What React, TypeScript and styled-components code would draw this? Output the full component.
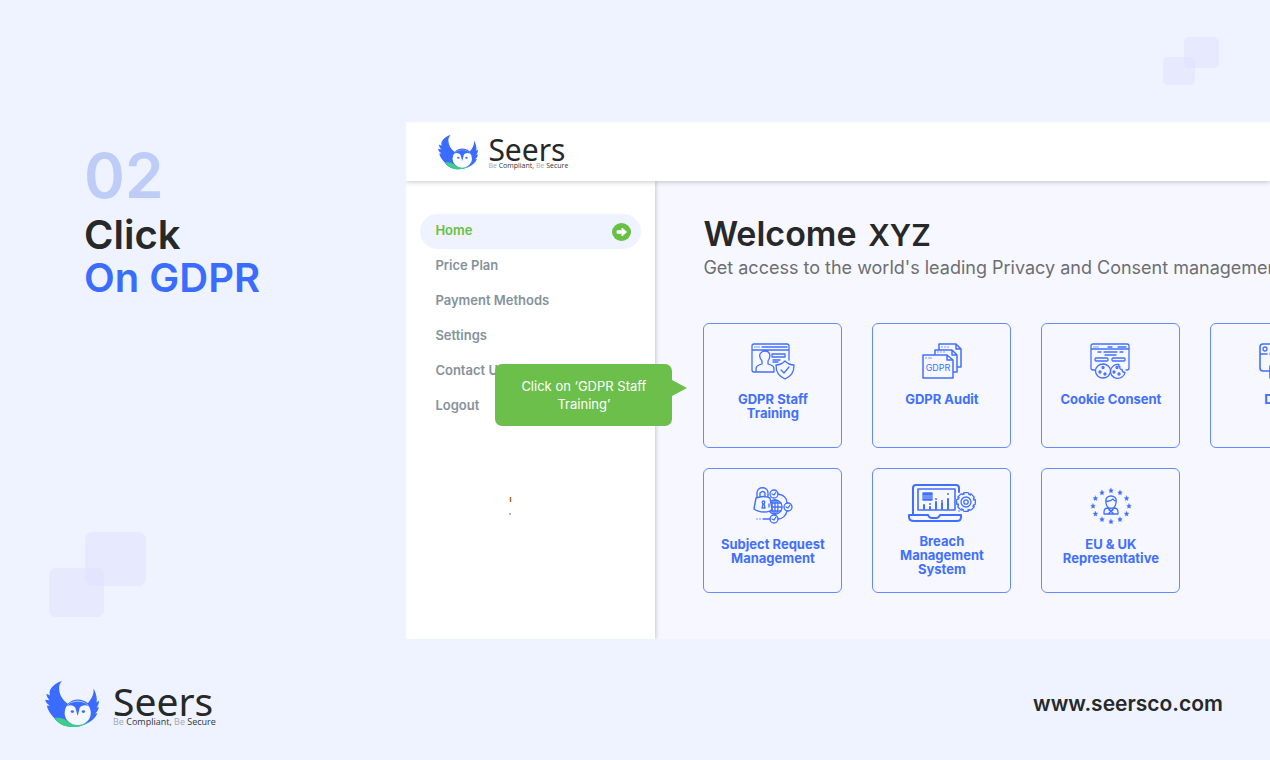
import React from 'react';
import styled, { createGlobalStyle } from 'styled-components';

const Global = createGlobalStyle`
  * { box-sizing: border-box; }
  body { margin: 0; background: #eef3ff; font-family: Inter, "Open Sans", sans-serif; color: #262829; }
  h1, h2, p, ul { margin: 0; padding: 0; }
`;

const Page = styled.div`
  position: relative;
  display: flex;
  flex-direction: column;
  min-height: 100vh;
  overflow: hidden;
`;

const Main = styled.main`
  display: flex;
  flex: 1;
  padding-top: 122px;
`;

const Intro = styled.section`
  flex: 0 0 32%;
  padding: 20px 0 0 84px;
`;

const StepNumber = styled.p`
  font-size: 62px;
  line-height: 68px;
  font-weight: 600;
  color: #bdcdf8;
`;

const StepTitle = styled.h1`
  padding-top: 3px;
  font-size: 40px;
  line-height: 43px;
  font-weight: 600;
  white-space: nowrap;
`;

const Accent = styled.span`
  display: block;
  color: #3a6dff;
`;

const Shot = styled.section`
  flex: 1;
  min-width: 0;
  display: flex;
  flex-direction: column;
  background: #f7f8ff;
  overflow: hidden;
`;

const ShotHeader = styled.header`
  position: relative;
  z-index: 1;
  height: 59px;
  padding: 12px 32px;
  background: #fff;
  box-shadow: 0 1px 5px rgba(0, 0, 0, 0.22);
`;

const ShotBody = styled.div`
  display: flex;
  flex: 1;
`;

const Sidebar = styled.nav`
  position: relative;
  flex: 0 0 249px;
  padding: 33px 14px;
  background: #fff;
  box-shadow: 1px 0 4px rgba(0, 0, 0, 0.2);
`;

const Menu = styled.ul`
  list-style: none;
`;

const MenuLink = styled.a<{ $active?: boolean }>`
  display: flex;
  align-items: center;
  justify-content: space-between;
  height: 35px;
  padding: 0 10px 0 15px;
  border-radius: 18px;
  background: ${p => (p.$active ? '#eef3ff' : 'transparent')};
  color: ${p => (p.$active ? '#68c143' : '#85929b')};
  font-size: 13px;
  line-height: 17px;
  font-weight: 600;
  text-decoration: none;
`;

const MenuText = styled.span`
  padding-bottom: 2px;
`;

const Tooltip = styled.div`
  position: absolute;
  left: 89px;
  top: 183px;
  width: 177px;
  padding: 13px 20px;
  border-radius: 7px;
  background: #6cbf4b;
  color: #fff;
  font-size: 13px;
  line-height: 18px;
  text-align: center;

  &::after {
    content: '';
    position: absolute;
    left: 100%;
    top: 16px;
    border: solid transparent;
    border-width: 8px 0 8px 15px;
    border-left-color: #6cbf4b;
  }
`;

const Caret = styled.svg`
  display: block;
  margin: 72px 0 0 88px;
`;

const Content = styled.div`
  flex: 1;
  min-width: 0;
  padding: 34px 0 46px 48px;
`;

const Welcome = styled.h2`
  font-size: 34px;
  line-height: 38px;
  font-weight: 600;
  white-space: nowrap;
`;

const UserName = styled.span`
  margin-left: 3px;
  font-size: 30px;
`;

const Lead = styled.p`
  padding-top: 3px;
  font-size: 18px;
  line-height: 22px;
  color: #6d6e72;
  white-space: nowrap;
`;

const Cards = styled.div`
  display: grid;
  grid-template-columns: repeat(4, 139px);
  gap: 20px 30px;
  padding-top: 44px;
`;

const Card = styled.button`
  display: flex;
  flex-direction: column;
  align-items: center;
  justify-content: flex-start;
  height: 125px;
  padding: 15px 8px 0;
  border: 1px solid #638bff;
  border-radius: 6px;
  background: transparent;
  color: #416fff;
  font-family: inherit;
  font-size: 13px;
  line-height: 14px;
  font-weight: 700;
`;

const CardLabel = styled.span<{ $lines: number }>`
  padding-top: ${p => (p.$lines > 2 ? 5 : 8)}px;
  white-space: pre-line;
`;

const Footer = styled.footer`
  display: flex;
  align-items: center;
  justify-content: space-between;
  height: 121px;
  padding: 8px 47px 0 45px;
`;

const SiteLink = styled.a`
  color: #262829;
  font-size: 21px;
  font-weight: 600;
  text-decoration: none;
`;

const Decor = styled.svg<{ $corner: 'top' | 'bottom' }>`
  position: absolute;
  ${p => (p.$corner === 'top' ? 'right: 51px; top: 37px;' : 'left: 49px; bottom: 142px;')}
`;

const LogoRow = styled.div<{ $gap: number }>`
  display: flex;
  align-items: flex-start;
  gap: ${p => p.$gap}px;
`;

const LogoText = styled.div`
  font-family: "Noto Sans", sans-serif;
  padding-top: 3px;
  white-space: nowrap;
`;

const LogoName = styled.div<{ $large?: boolean }>`
  font-size: ${p => (p.$large ? 39 : 30)}px;
  line-height: ${p => (p.$large ? 33 : 25)}px;
`;

const LogoTag = styled.div<{ $large?: boolean }>`
  font-family: "Open Sans", sans-serif;
  font-size: ${p => (p.$large ? 9 : 7)}px;
  line-height: ${p => (p.$large ? 10 : 7)}px;
  color: #333638;
`;

const Faint = styled.span`
  color: #a5a9ae;
`;

const OwlIcon = ({ width, height, face }: { width: number; height: number; face: string }) => (
  <svg width={width} height={height} viewBox="0 0 160 137" aria-hidden="true">
    <path fill="#3a6dff" d="M50 0C32 5 15 19 13 34c0 4 1 7 2 9L4 38c0 8 4 14 9 19L0 56c2 9 7 14 14 17l-9 1c3 13 11 25 23 38 12 16 30 25 54 25 28 0 62-14 74-41l-7 1c6-6 11-12 10-20l-6 3c5-7 8-14 7-21l-7 4c3-15-3-31-9-41 2 18-6 31-17 44-18-15-43-15-60 2C52 56 43 42 42 26 40 16 44 7 50 0z" />
    <path fill="#3dce8b" d="M28 111c14-3 27-1 40 10 20 13 46 10 65-1-14 12-33 17-53 17-22 0-42-10-52-26z" />
    <ellipse cx="97" cy="95" rx="39" ry="36" fill={face} />
    <path fill="#3a6dff" d="M65 75c12-19 52-19 64 0-12-5-21-2-26 5l-6 24-7-24c-5-7-14-10-25-5z" />
    <ellipse cx="81" cy="91" rx="5" ry="4" fill="#3a6dff" />
    <ellipse cx="114" cy="91" rx="5" ry="4" fill="#3a6dff" />
  </svg>
);

const Logo = ({ large }: { large?: boolean }) => (
  <LogoRow $gap={large ? 14 : 10}>
    <OwlIcon width={large ? 54 : 40} height={large ? 46 : 36} face={large ? '#f5f8ff' : '#fff'} />
    <LogoText>
      <LogoName $large={large}>Seers</LogoName>
      <LogoTag $large={large}><Faint>Be</Faint> Compliant, <Faint>Be</Faint> Secure</LogoTag>
    </LogoText>
  </LogoRow>
);

const Icon = ({ width = 60, children }: { width?: number; children: React.ReactNode }) => (
  <svg width={width} height={45} viewBox={`0 0 ${width} 45`} fill="none" stroke="#416fff" strokeWidth="1.3" strokeLinecap="round" strokeLinejoin="round" aria-hidden="true">
    {children}
  </svg>
);

const StaffIcon = () => (
  <Icon>
    <path d="M31 33H11q-2 0-2-2V7q0-2 2-2h33q2 0 2 2v14M9 11h37M12 8h0M14 8h0M16 8h0M19 8h25M13 33v-3q0-3 3-4l3-1v-3c-5-6-1-10 3-10s7 4 3 10v3l3 1q3 1 3 4v3M29 15h13v3H29zM30 21h7M30 23h5" />
    <path d="M42 22q-4 4-9 4c0 8 3 11 9 14 6-3 9-6 9-14q-5 0-9-4zM38 31l3 3 5-6" />
  </Icon>
);

const AuditIcon = () => (
  <Icon>
    <path strokeWidth="1.5" d="M11 16h24l6 5v18H11zM35 16v5h6M23 15v-4h17l5 5v17h-4M40 11v5h5M27 10V5h17l5 5v18h-4M44 5v5h5" />
    <path d="M14 19h0M17 19h0M19 19h0M26 13h0M29 13h0M32 13h0M30 8h0M33 8h0M36 8h0" />
    <text x="26" y="32" textAnchor="middle" fill="#416fff" stroke="none" fontSize="9" fontWeight="400" fontFamily="Inter, sans-serif">GDPR</text>
  </Icon>
);

const Cookie = ({ x, bitten }: { x: number; bitten?: boolean }) => (
  <g>
    {bitten
      ? <path d={`M${x + 2} 25.5a7.3 7 0 1 0 6 8q-3 0-3-3-3 0-2-3-2 0-1-2z`} />
      : <ellipse cx={x} cy="32" rx="7.5" ry="7" />}
    <circle cx={x} cy="28.5" r="1" /><circle cx={x - 3} cy="33" r="1" /><circle cx={x + 2} cy="35" r="1" />
  </g>
);

const CookieIcon = () => (
  <Icon>
    <path d="M14 31h-2q-2 0-2-2V7q0-2 2-2h34q2 0 2 2v22q0 2-2 2h-1M10 10h38M13 8h0M15 8h0M17 8h0M27 8h4M37 8h8M17 13h3M23 13h13M39 13h3M24 16h11" />
    <rect x="14" y="19" width="13" height="3" rx="1" /><rect x="31" y="19" width="13" height="3" rx="1" />
    <Cookie x={22} /><Cookie x={36} bitten />
  </Icon>
);

const DeviceIcon = () => (
  <Icon>
    <path strokeWidth="1.6" d="M19 32h-6q-3 0-3-3V8q0-3 3-3h30v24M10 15h7M20 15h18M20 27v12h20" />
    <circle cx="15" cy="10" r="2" />
  </Icon>
);

const CHECKS = [[31, 10], [45, 23], [31, 35]];

const RequestIcon = () => (
  <Icon>
    <path d="M35 10c6 1 9 4 9 9M44 27c-1 5-5 8-9 8M20 35h7M14 35h0M17 35h0" />
    {CHECKS.map(([x, y]) => (
      <g key={y}><circle cx={x} cy={y} r="4" /><path d={`M${x - 2} ${y}l2 1 2-3`} /></g>
    ))}
    <circle cx="32" cy="23" r="7" /><ellipse cx="32" cy="23" rx="3" ry="7" />
    <path d="M25 23h14M26 19h12M26 27h12M32 16v14" />
    <path fill="#f7f8ff" strokeWidth="1.4" d="M13 14c5-2 10-2 14 0l2 11c-2 4-13 4-18 0zM14 13V9c0-7 11-7 11 0v4M17 13V9q3-3 5 0v4" />
    <path d="M19 24l1-4c-3-4 4-4 1 0l1 4zM26 20v3" />
  </Icon>
);

const TEETH = Array.from({ length: 8 }, (_, i) => i * 45);

const BreachIcon = () => (
  <Icon width={70}>
    <g strokeWidth="2">
      <path d="M6 30V4q0-3 3-3h40q3 0 3 3v4M2 31h19q1 3 4 3h4q3 0 4-3h21v2q0 4-4 4H7q-5 0-5-4z" />
      <path strokeWidth="1.6" d="M48 26H11V5h37zM52 27h0" />
      <path d="M17 25v-4M23 25v-2M29 25v-7M35 25v-6M41 25V15" />
    </g>
    <path d="M23 20h0M29 15h0M35 17h0M41 10h0" strokeWidth="2" />
    <path fill="#416fff" d="M16 9h9v7h-9z" />
    <path stroke="#f7f8ff" strokeWidth="0.5" d="M16 12h9M16 14h9" />
    {TEETH.map(a => (
      <path key={a} transform={`rotate(${a} 59 18)`} d="M55.8 10.5l1-1.8h4.4l1 1.8 1.2.6" />
    ))}
    <circle cx="59" cy="18" r="5" /><circle cx="59" cy="18" r="2.2" />
  </Icon>
);

const STARS = Array.from({ length: 12 }, (_, i) => i * 30);

const RepresentativeIcon = () => (
  <Icon>
    {STARS.map(a => {
      const x = 30 + 18 * Math.sin((a * Math.PI) / 180);
      const y = 22 - 15.5 * Math.cos((a * Math.PI) / 180);
      return (
        <path key={a} transform={`translate(${x} ${y})`} fill="#416fff" stroke="#416fff" strokeWidth="0.4" d="M0-2.3l.7 1.5 1.6.2-1.2 1.1.3 1.7L0 1.4l-1.4.8.3-1.7-1.2-1.1 1.6-.2z" />
      );
    })}
    <path d="M25 18c-2-8 12-8 10 0M25 17q4 1 7-2 1 2 3 2v2c-1 7-9 7-10 0zM23 30v-2q0-4 4-4l3 3 3-3q4 0 4 4v2zM28 26l4 3M32 26l-4 3" />
  </Icon>
);

const menu = ['Home', 'Price Plan', 'Payment Methods', 'Settings', 'Contact Us', 'Logout'];

const cards = [
  { label: 'GDPR Staff\nTraining', icon: <StaffIcon /> },
  { label: 'GDPR Audit', icon: <AuditIcon /> },
  { label: 'Cookie Consent', icon: <CookieIcon /> },
  { label: 'DPIA', icon: <DeviceIcon /> },
  { label: 'Subject Request\nManagement', icon: <RequestIcon /> },
  { label: 'Breach\nManagement\nSystem', icon: <BreachIcon /> },
  { label: 'EU & UK\nRepresentative', icon: <RepresentativeIcon /> },
];

export default function App() {
  return (
    <Page>
      <Global />
      <Decor $corner="top" width="56" height="48" fill="#e0e0ff" fillOpacity="0.5" aria-hidden="true">
        <rect x="21" width="35" height="31" rx="5" />
        <rect y="20" width="32" height="28" rx="5" />
      </Decor>
      <Decor $corner="bottom" width="98" height="86" fill="#e0e0ff" fillOpacity="0.5" aria-hidden="true">
        <rect x="36" width="61" height="54" rx="8" />
        <rect y="36" width="55" height="49" rx="7" />
      </Decor>
      <Main>
        <Intro>
          <StepNumber>02</StepNumber>
          <StepTitle>Click <Accent>On GDPR</Accent></StepTitle>
        </Intro>
        <Shot>
          <ShotHeader><Logo /></ShotHeader>
          <ShotBody>
            <Sidebar>
              <Menu>
                {menu.map((item, i) => (
                  <li key={item}>
                    <MenuLink href="#" $active={i === 0}>
                      <MenuText>{item}</MenuText>
                      {i === 0 && (
                        <svg width="19" height="18" viewBox="0 0 19 18" aria-hidden="true">
                          <ellipse cx="9.5" cy="9" rx="9.5" ry="9" fill="#68c143" />
                          <path fill="#fff" stroke="#fff" strokeLinejoin="round" d="M5 7.8h5V5l4.5 4-4.5 4v-2.8H5z" />
                        </svg>
                      )}
                    </MenuLink>
                  </li>
                ))}
              </Menu>
              <Caret width="4" height="20" aria-hidden="true">
                <path d="M2.5 1v5" stroke="#b5602c" strokeWidth="1.4" />
                <path d="M1 18h2" stroke="#75666c" strokeWidth="1" />
              </Caret>
              <Tooltip role="tooltip">Click on ‘GDPR Staff Training’</Tooltip>
            </Sidebar>
            <Content>
              <Welcome>Welcome <UserName>XYZ</UserName></Welcome>
              <Lead>Get access to the world's leading Privacy and Consent management platform</Lead>
              <Cards>
                {cards.map(card => (
                  <Card key={card.label} type="button">
                    {card.icon}
                    <CardLabel $lines={card.label.split('\n').length}>{card.label}</CardLabel>
                  </Card>
                ))}
              </Cards>
            </Content>
          </ShotBody>
        </Shot>
      </Main>
      <Footer>
        <Logo large />
        <SiteLink href="#">www.seersco.com</SiteLink>
      </Footer>
    </Page>
  );
}
